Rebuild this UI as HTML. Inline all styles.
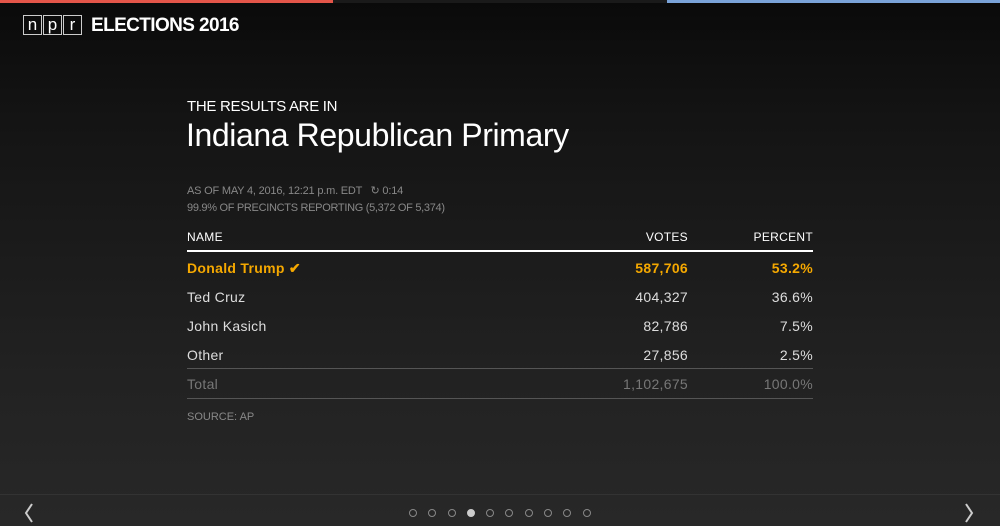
<!DOCTYPE html>
<html><head><meta charset="utf-8"><style>
*{margin:0;padding:0;box-sizing:border-box}
body{width:1000px;height:526px;overflow:hidden;font-family:"Liberation Sans",sans-serif;background:linear-gradient(#0a0a0a 0px,#141414 120px,#222 380px,#282828 526px);position:relative;color:#fff}
.bar{position:absolute;top:0;height:3px}
.abs{position:absolute;white-space:nowrap}
.logo{left:23px;top:15px;display:flex;gap:0}
.logo span{display:inline-block;width:19px;height:20px;border:1px solid #ccc;font-size:17px;line-height:17px;text-align:center;color:#fff;margin-right:1px}
.row{position:absolute;left:187px;width:626px;height:20px;font-size:14px;letter-spacing:0.3px;color:#ddd}
.row span{position:absolute;top:0}
.c1{left:0}.c2{right:125px}.c3{right:0}
.hdr{font-size:12px;color:#fff}
.win{color:#f5a800;font-weight:bold}
.tot{color:#777}
.line{position:absolute;left:187px;width:626px}
.dot{position:absolute;top:509px;width:8px;height:8px;border:1px solid #888;border-radius:50%}
</style></head><body>
<div class="bar" style="left:0;width:333px;background:#e45549"></div>
<div class="bar" style="left:333px;width:334px;background:#1a1a1a"></div>
<div class="bar" style="left:667px;width:333px;background:#7aa3d8"></div>
<div class="abs logo"><span>n</span><span>p</span><span>r</span></div>
<div class="abs" style="left:91px;top:15px;font-size:19px;font-weight:bold;letter-spacing:-0.6px">ELECTIONS 2016</div>
<div class="abs" style="left:187px;top:98px;font-size:15px;letter-spacing:-0.3px">THE RESULTS ARE IN</div>
<div class="abs" style="left:186px;top:117px;font-size:32px;letter-spacing:-0.4px">Indiana Republican Primary</div>
<div class="abs" style="left:187px;top:184px;font-size:11px;color:#888;letter-spacing:-0.2px">AS OF MAY 4, 2016, 12:21 p.m. EDT &nbsp;&nbsp;↻ 0:14</div>
<div class="abs" style="left:187px;top:202px;font-size:11px;color:#888;letter-spacing:-0.3px">99.9% OF PRECINCTS REPORTING (5,372 OF 5,374)</div>
<div class="row hdr" style="top:230px"><span class="c1">NAME</span><span class="c2">VOTES</span><span class="c3">PERCENT</span></div>
<div class="line" style="top:250px;height:2px;background:#fff"></div>
<div class="row win" style="top:260px"><span class="c1">Donald Trump ✔</span><span class="c2">587,706</span><span class="c3">53.2%</span></div>
<div class="row" style="top:289px"><span class="c1">Ted Cruz</span><span class="c2">404,327</span><span class="c3">36.6%</span></div>
<div class="row" style="top:318px"><span class="c1">John Kasich</span><span class="c2">82,786</span><span class="c3">7.5%</span></div>
<div class="row" style="top:347px"><span class="c1">Other</span><span class="c2">27,856</span><span class="c3">2.5%</span></div>
<div class="line" style="top:368px;height:1px;background:#555"></div>
<div class="row tot" style="top:376px"><span class="c1">Total</span><span class="c2">1,102,675</span><span class="c3">100.0%</span></div>
<div class="line" style="top:398px;height:1px;background:#555"></div>
<div class="abs" style="left:187px;top:411px;font-size:11px;color:#888">SOURCE: AP</div>
<div style="position:absolute;left:0;top:494px;width:1000px;height:1px;background:#333"></div>
<svg class="abs" style="left:22px;top:502px" width="14" height="22"><path d="M10 2 L4 11 L10 20" stroke="#ccc" stroke-width="2" fill="none"/></svg>
<svg class="abs" style="left:962px;top:502px" width="14" height="22"><path d="M4 2 L10 11 L4 20" stroke="#ccc" stroke-width="2" fill="none"/></svg>
<div class="dot" style="left:409px"></div><div class="dot" style="left:428px"></div><div class="dot" style="left:448px"></div>
<div class="dot" style="left:467px;background:#ccc;border-color:#ccc"></div>
<div class="dot" style="left:486px"></div><div class="dot" style="left:505px"></div><div class="dot" style="left:525px"></div>
<div class="dot" style="left:544px"></div><div class="dot" style="left:563px"></div><div class="dot" style="left:583px"></div>
</body></html>
